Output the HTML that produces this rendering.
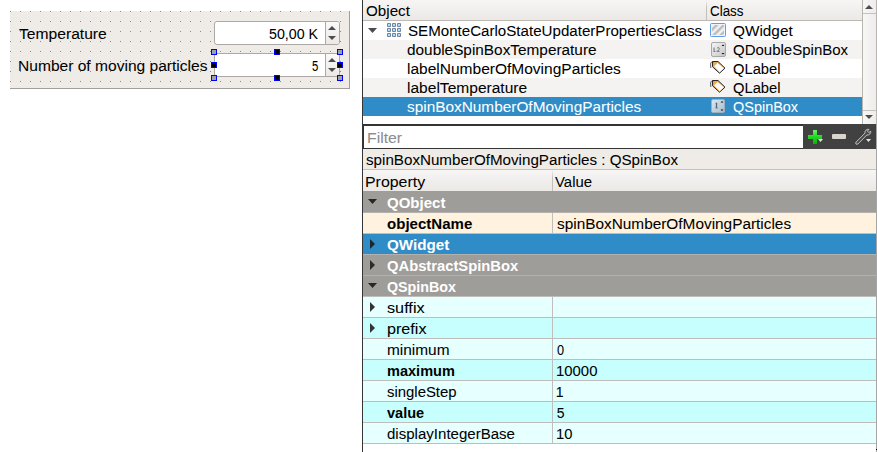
<!DOCTYPE html>
<html><head><meta charset="utf-8">
<style>
html,body{margin:0;padding:0;}
body{width:877px;height:452px;overflow:hidden;background:#fff;position:relative;font-family:"Liberation Sans",sans-serif;}
.a{position:absolute;box-sizing:border-box;}
.t{position:absolute;transform-origin:0 0;font-size:14px;line-height:16px;white-space:nowrap;color:#000;font-family:"Liberation Sans",sans-serif;}
.hd{width:6px;height:6px;border:1px solid #0000ff;background:#000;position:absolute;box-sizing:border-box;}
.hg{background:#a0a0a0;}
</style></head><body>
<!-- left form -->
<div class="a" style="left:10px;top:11px;width:340px;height:78px;background:#efebe7;border-right:1px solid #a19f9c;border-bottom:1px solid #a19f9c;"></div>
<svg class="a" style="left:10px;top:11px" width="339" height="77">
<defs><pattern id="dots" x="0" y="0" width="10" height="10" patternUnits="userSpaceOnUse"><rect x="0" y="0" width="1" height="1" fill="#8a8886"/></pattern></defs>
<rect width="339" height="77" fill="url(#dots)"/>
</svg>
<!-- spinbox 1 -->
<div class="a" style="left:214px;top:21px;width:126px;height:24px;background:#fff;border:1px solid #aba8a5;border-radius:3px;"></div>
<div class="a" style="left:325px;top:22px;width:14px;height:22px;border-left:1px solid #aba8a5;background:linear-gradient(#fbfaf9,#ebe8e5);border-radius:0 2px 2px 0;"></div>
<svg class="a" style="left:328px;top:26px" width="8" height="14"><path d="M0 4 L4 0 L8 4 Z M0 10 L8 10 L4 14 Z" fill="#4d4d4d"/></svg>
<!-- spinbox 2 -->
<div class="a" style="left:214px;top:53px;width:126px;height:24px;background:#fff;border:1px solid #aba8a5;border-radius:3px;"></div>
<div class="a" style="left:325px;top:54px;width:14px;height:22px;border-left:1px solid #aba8a5;background:linear-gradient(#fbfaf9,#ebe8e5);border-radius:0 2px 2px 0;"></div>
<svg class="a" style="left:328px;top:58px" width="8" height="14"><path d="M0 4 L4 0 L8 4 Z M0 10 L8 10 L4 14 Z" fill="#4d4d4d"/></svg>
<!-- handles -->
<div class="hd hg" style="left:211px;top:49px"></div>
<div class="hd" style="left:274px;top:49px"></div>
<div class="hd hg" style="left:337px;top:49px"></div>
<div class="hd" style="left:211px;top:62px"></div>
<div class="hd" style="left:337px;top:62px"></div>
<div class="hd hg" style="left:211px;top:75px"></div>
<div class="hd" style="left:274px;top:75px"></div>
<div class="hd hg" style="left:337px;top:75px"></div>

<!-- right panel -->
<div class="a" style="left:362px;top:0;width:1px;height:452px;background:#363636;"></div>
<div class="a" style="left:876px;top:0;width:1px;height:452px;background:#a5a5a5;"></div>
<!-- tree header -->
<div class="a" style="left:363px;top:0;width:499px;height:21px;background:linear-gradient(#f7f6f5,#ebe8e5);border-bottom:1px solid #bdbab6;"></div>
<div class="a" style="left:706px;top:0;width:1px;height:20px;background:linear-gradient(rgba(180,177,173,0),#c2bfbb 40%);"></div>
<!-- rows -->
<div class="a" style="left:363px;top:21px;width:499px;height:19px;background:#fff;"></div>
<div class="a" style="left:363px;top:40px;width:499px;height:19px;background:#f5f3f1;"></div>
<div class="a" style="left:363px;top:59px;width:499px;height:19px;background:#fff;"></div>
<div class="a" style="left:363px;top:78px;width:499px;height:19px;background:#f5f3f1;"></div>
<div class="a" style="left:363px;top:97px;width:499px;height:19px;background:#308cc6;"></div>
<svg class="a" style="left:368px;top:28px" width="9" height="5"><path d="M0 0 L9 0 L4.5 5 Z" fill="#4a4a4a"/></svg>
<!-- grid icon -->
<svg class="a" style="left:386px;top:22px" width="16" height="16"><rect x="1" y="1" width="4" height="4" rx="1" fill="#71839e"/><rect x="2" y="2" width="2" height="2" fill="#aee0ff"/><rect x="6" y="1" width="4" height="4" rx="1" fill="#71839e"/><rect x="7" y="2" width="2" height="2" fill="#aee0ff"/><rect x="11" y="1" width="4" height="4" rx="1" fill="#71839e"/><rect x="12" y="2" width="2" height="2" fill="#aee0ff"/><rect x="1" y="6" width="4" height="4" rx="1" fill="#71839e"/><rect x="2" y="7" width="2" height="2" fill="#aee0ff"/><rect x="6" y="6" width="4" height="4" rx="1" fill="#71839e"/><rect x="7" y="7" width="2" height="2" fill="#aee0ff"/><rect x="11" y="6" width="4" height="4" rx="1" fill="#71839e"/><rect x="12" y="7" width="2" height="2" fill="#aee0ff"/><rect x="1" y="11" width="4" height="4" rx="1" fill="#71839e"/><rect x="2" y="12" width="2" height="2" fill="#aee0ff"/><rect x="6" y="11" width="4" height="4" rx="1" fill="#71839e"/><rect x="7" y="12" width="2" height="2" fill="#aee0ff"/><rect x="11" y="11" width="4" height="4" rx="1" fill="#71839e"/><rect x="12" y="12" width="2" height="2" fill="#aee0ff"/></svg>
<!-- class icons -->
<svg class="a" style="left:710px;top:23px" width="16" height="14">
<defs><pattern id="hatch" width="5" height="5" patternUnits="userSpaceOnUse" patternTransform="rotate(45)"><rect width="5" height="5" fill="#f2f2f2"/><rect width="2.5" height="5" fill="#bdbdbd"/></pattern></defs>
<rect x="0.5" y="0.5" width="15" height="13" rx="1" fill="#eef4fc" stroke="#5f9de6"/>
<rect x="2" y="2" width="12" height="10" fill="url(#hatch)"/>
</svg>
<svg class="a" style="left:710px;top:41px" width="16" height="16">
<defs><linearGradient id="sg" x1="0" y1="0" x2="1" y2="1"><stop offset="0" stop-color="#f6f6f6"/><stop offset="1" stop-color="#c4c4c4"/></linearGradient></defs>
<rect x="1.5" y="1.5" width="14" height="14" rx="1.5" fill="url(#sg)" stroke="#a8a8a8"/>
<path d="M4 6.5 V10.5 M3.5 10.5 H4.8" stroke="#666" stroke-width="0.9"/>
<rect x="5.6" y="9.8" width="0.9" height="0.9" fill="#666"/>
<path d="M7.3 7 Q8.8 5.8 9.3 7.2 Q9.3 8.2 7.4 10.4 H9.6" stroke="#666" stroke-width="0.9" fill="none"/>
<path d="M11.5 5 L13 3.5 L14.5 5 Z M11.5 12 L14.5 12 L13 13.5 Z" fill="#111"/>
</svg>
<svg class="a" style="left:708px;top:58px" width="20" height="18">
<path d="M4.5 3.5 L10 3.5 L17 10.2 L11.5 15.2 L4.5 8.8 Z" fill="#f0a850" stroke="#2a2a2a" stroke-width="1" stroke-linejoin="round"/>
<path d="M6.2 8.3 L9.6 4.9 L16 10.2 L11.6 14.3 Z" fill="#fff"/>
<path d="M6 3.8 C4 3.6 2.6 4.2 2.6 6 L2.8 10" stroke="#333" stroke-width="0.8" fill="none"/>
</svg>
<svg class="a" style="left:708px;top:77px" width="20" height="18">
<path d="M4.5 3.5 L10 3.5 L17 10.2 L11.5 15.2 L4.5 8.8 Z" fill="#f0a850" stroke="#2a2a2a" stroke-width="1" stroke-linejoin="round"/>
<path d="M6.2 8.3 L9.6 4.9 L16 10.2 L11.6 14.3 Z" fill="#fff"/>
<path d="M6 3.8 C4 3.6 2.6 4.2 2.6 6 L2.8 10" stroke="#333" stroke-width="0.8" fill="none"/>
</svg>
<svg class="a" style="left:710px;top:98px" width="16" height="16">
<defs><linearGradient id="qg" x1="0" y1="0" x2="1" y2="1"><stop offset="0" stop-color="#dbe9f5"/><stop offset="1" stop-color="#a9bccb"/></linearGradient></defs>
<rect x="1.5" y="1.5" width="13" height="13" rx="1.5" fill="url(#qg)" stroke="#9eb0bf"/>
<path d="M6.5 5 V10" stroke="#5a6570" stroke-width="1.3"/>
<path d="M5.6 5.2 H7.2 M5.6 10 H7.6" stroke="#5a6570" stroke-width="0.9"/>
<path d="M10.5 4.5 L12 3 L13.5 4.5 Z M10.5 11.5 L13.5 11.5 L12 13 Z" fill="#111"/>
</svg>
<!-- scrollbar -->
<div class="a" style="left:862px;top:0;width:15px;height:124px;background:linear-gradient(90deg,#f8f7f6,#efedeb);border-left:1px solid #b8b5b1;border-right:1px solid #b8b5b1;"></div>
<div class="a" style="left:863px;top:13px;width:13px;height:1px;background:#c5c2be;"></div>
<div class="a" style="left:863px;top:110px;width:13px;height:1px;background:#c5c2be;"></div>
<svg class="a" style="left:865px;top:5px" width="8" height="4"><path d="M0 4 L4 0 L8 4 Z" fill="#4d4d4d"/></svg>
<svg class="a" style="left:865px;top:115px" width="8" height="4"><path d="M0 0 L8 0 L4 4 Z" fill="#4d4d4d"/></svg>
<!-- filter -->
<div class="a" style="left:363px;top:124px;width:513px;height:25px;background:#414142;"></div>
<div class="a" style="left:363px;top:124px;width:440px;height:25px;background:#fff;border-top:2px solid #343434;border-left:1px solid #343434;border-bottom:1px solid #343434;"></div>
<svg class="a" style="left:803px;top:124px" width="73" height="25">
<defs><linearGradient id="pg" x1="0" y1="0" x2="0" y2="1"><stop offset="0" stop-color="#66f266"/><stop offset="0.5" stop-color="#1fd81f"/><stop offset="1" stop-color="#0fae0f"/></linearGradient></defs>
<path d="M10 6 H14 V11 H19 V15 H14 V20 H10 V15 H5 V11 H10 Z" fill="url(#pg)"/>
<path d="M15 15 L20 15 L17.5 18 Z" fill="#e6e6e6"/>
<rect x="29" y="10" width="14" height="5" rx="1" fill="#d9d4cd"/>
<g transform="translate(60,13) rotate(-45)">
<path d="M -8.5 -1.3 L 4.2 -1.3 A 3.1 3.1 0 0 1 9.6 -1.1 L 7.3 -1.1 L 7.3 1.1 L 9.6 1.1 A 3.1 3.1 0 0 1 4.2 1.3 L -8.5 1.3 A 1.3 1.3 0 0 1 -8.5 -1.3 Z" fill="#4a4a4a" stroke="#c8c8c8" stroke-width="0.9"/>
</g>
<path d="M63 15 L68 15 L65.5 18 Z" fill="#e6e6e6"/>
</svg>
<!-- info label -->
<div class="a" style="left:363px;top:149px;width:513px;height:21px;background:#efebe7;border-bottom:1px solid #c6c2bd;"></div>
<!-- property header -->
<div class="a" style="left:363px;top:170px;width:513px;height:21px;background:linear-gradient(#f7f6f5,#ebe8e5);"></div>
<div class="a" style="left:552px;top:170px;width:1px;height:21px;background:linear-gradient(rgba(180,177,173,0),#c2bfbb 40%);"></div>
<!-- property rows -->
<div class="a" style="left:363px;top:191px;width:513px;height:22px;background:#9f9d9a;border-bottom:1px solid #b3b0ad;"></div>
<div class="a" style="left:363px;top:213px;width:513px;height:21px;background:#fff2de;border-bottom:1px solid #c0bebb;"></div>
<div class="a" style="left:363px;top:234px;width:513px;height:21px;background:#308cc6;border-bottom:1px solid #b3b0ad;"></div>
<div class="a" style="left:363px;top:255px;width:513px;height:21px;background:#9f9d9a;border-bottom:1px solid #b3b0ad;"></div>
<div class="a" style="left:363px;top:276px;width:513px;height:21px;background:#9f9d9a;border-bottom:1px solid #c0bebb;"></div>
<div class="a" style="left:363px;top:297px;width:513px;height:21px;background:#e6ffff;border-bottom:1px solid #c0bebb;"></div>
<div class="a" style="left:363px;top:318px;width:513px;height:21px;background:#c7ffff;border-bottom:1px solid #c0bebb;"></div>
<div class="a" style="left:363px;top:339px;width:513px;height:21px;background:#e6ffff;border-bottom:1px solid #c0bebb;"></div>
<div class="a" style="left:363px;top:360px;width:513px;height:21px;background:#c7ffff;border-bottom:1px solid #c0bebb;"></div>
<div class="a" style="left:363px;top:381px;width:513px;height:21px;background:#e6ffff;border-bottom:1px solid #c0bebb;"></div>
<div class="a" style="left:363px;top:402px;width:513px;height:21px;background:#c7ffff;border-bottom:1px solid #c0bebb;"></div>
<div class="a" style="left:363px;top:423px;width:513px;height:21px;background:#e6ffff;border-bottom:1px solid #c0bebb;"></div>
<!-- vertical grid line for value rows -->
<div class="a" style="left:552px;top:213px;width:1px;height:20px;background:#c0bebb;"></div>
<div class="a" style="left:552px;top:297px;width:1px;height:146px;background:#c0bebb;"></div>
<!-- expand arrows -->
<svg class="a" style="left:368px;top:199px" width="9" height="6"><path d="M0 0 L9 0 L4.5 5 Z" fill="#262626"/></svg>
<svg class="a" style="left:370px;top:239px" width="6" height="10"><path d="M0 0 L5 5 L0 10 Z" fill="#1b2631"/></svg>
<svg class="a" style="left:370px;top:260px" width="6" height="10"><path d="M0 0 L5 5 L0 10 Z" fill="#2b2b2b"/></svg>
<svg class="a" style="left:368px;top:283px" width="9" height="6"><path d="M0 0 L9 0 L4.5 5 Z" fill="#262626"/></svg>
<svg class="a" style="left:370px;top:302px" width="6" height="10"><path d="M0 0 L5 5 L0 10 Z" fill="#333"/></svg>
<svg class="a" style="left:370px;top:323px" width="6" height="10"><path d="M0 0 L5 5 L0 10 Z" fill="#333"/></svg>
<!-- black dot -->
<div class="a" style="left:876px;top:449px;width:1px;height:1px;background:#000;"></div>
<div class="t" style="left:19.00px;top:26px;transform:scaleX(1.1167);-webkit-text-stroke:0.05px #000;">Temperature</div>
<div class="t" style="left:18.49px;top:58px;transform:scaleX(1.1122);-webkit-text-stroke:0.05px #000;">Number of moving particles</div>
<div class="t" style="left:269.00px;top:26px;transform:scaleX(1.0179);-webkit-text-stroke:0.05px #000;">50,00 K</div>
<div class="t" style="left:312.00px;top:58px;transform:scaleX(0.8125);-webkit-text-stroke:0.05px #000;">5</div>
<div class="t" style="left:366.00px;top:3px;transform:scaleX(1.0845);-webkit-text-stroke:0.05px #000;">Object</div>
<div class="t" style="left:709.50px;top:3px;transform:scaleX(0.9570);-webkit-text-stroke:0.05px #000;">Class</div>
<div class="t" style="left:408.00px;top:23px;transform:scaleX(1.0795);-webkit-text-stroke:0.05px #000;">SEMonteCarloStateUpdaterPropertiesClass</div>
<div class="t" style="left:732.70px;top:23px;transform:scaleX(1.0958);-webkit-text-stroke:0.05px #000;">QWidget</div>
<div class="t" style="left:406.50px;top:42px;transform:scaleX(1.0972);-webkit-text-stroke:0.05px #000;">doubleSpinBoxTemperature</div>
<div class="t" style="left:732.70px;top:42px;transform:scaleX(1.0717);-webkit-text-stroke:0.05px #000;">QDoubleSpinBox</div>
<div class="t" style="left:406.50px;top:61px;transform:scaleX(1.1080);-webkit-text-stroke:0.05px #000;">labelNumberOfMovingParticles</div>
<div class="t" style="left:732.70px;top:61px;transform:scaleX(1.0525);-webkit-text-stroke:0.05px #000;">QLabel</div>
<div class="t" style="left:406.50px;top:80px;transform:scaleX(1.1108);-webkit-text-stroke:0.05px #000;">labelTemperature</div>
<div class="t" style="left:732.70px;top:80px;transform:scaleX(1.0525);-webkit-text-stroke:0.05px #000;">QLabel</div>
<div class="t" style="left:406.50px;top:99px;transform:scaleX(1.0985);-webkit-text-stroke:0.05px #fff;color:#fff;">spinBoxNumberOfMovingParticles</div>
<div class="t" style="left:732.70px;top:99px;transform:scaleX(1.0328);-webkit-text-stroke:0.05px #fff;color:#fff;">QSpinBox</div>
<div class="t" style="left:367.17px;top:130px;transform:scaleX(1.1265);-webkit-text-stroke:0.05px #8c8c8c;color:#8c8c8c;">Filter</div>
<div class="t" style="left:366.00px;top:152px;transform:scaleX(1.0837);-webkit-text-stroke:0.05px #000;">spinBoxNumberOfMovingParticles : QSpinBox</div>
<div class="t" style="left:364.86px;top:174px;transform:scaleX(1.1366);-webkit-text-stroke:0.05px #000;">Property</div>
<div class="t" style="left:555.40px;top:174px;transform:scaleX(1.0663);-webkit-text-stroke:0.05px #000;">Value</div>
<div class="t" style="left:386.60px;top:195px;transform:scaleX(1.0731);font-weight:bold;color:#fff;">QObject</div>
<div class="t" style="left:386.60px;top:216px;transform:scaleX(1.0745);font-weight:bold;">objectName</div>
<div class="t" style="left:386.60px;top:237px;transform:scaleX(1.0855);font-weight:bold;color:#fff;">QWidget</div>
<div class="t" style="left:386.60px;top:258px;transform:scaleX(1.0539);font-weight:bold;color:#fff;">QAbstractSpinBox</div>
<div class="t" style="left:386.60px;top:279px;transform:scaleX(1.0194);font-weight:bold;color:#fff;">QSpinBox</div>
<div class="t" style="left:386.60px;top:300px;transform:scaleX(1.1597);-webkit-text-stroke:0.05px #000;">suffix</div>
<div class="t" style="left:386.60px;top:321px;transform:scaleX(1.1538);-webkit-text-stroke:0.05px #000;">prefix</div>
<div class="t" style="left:386.60px;top:342px;transform:scaleX(1.1013);-webkit-text-stroke:0.05px #000;">minimum</div>
<div class="t" style="left:386.60px;top:363px;transform:scaleX(1.0384);font-weight:bold;">maximum</div>
<div class="t" style="left:386.60px;top:384px;transform:scaleX(1.0641);-webkit-text-stroke:0.05px #000;">singleStep</div>
<div class="t" style="left:386.60px;top:405px;transform:scaleX(1.0385);font-weight:bold;">value</div>
<div class="t" style="left:386.60px;top:426px;transform:scaleX(1.0747);-webkit-text-stroke:0.05px #000;">displayIntegerBase</div>
<div class="t" style="left:556.80px;top:216px;transform:scaleX(1.0981);-webkit-text-stroke:0.05px #000;">spinBoxNumberOfMovingParticles</div>
<div class="t" style="left:556.80px;top:342px;transform:scaleX(0.9125);-webkit-text-stroke:0.05px #000;">0</div>
<div class="t" style="left:555.74px;top:363px;transform:scaleX(1.0644);-webkit-text-stroke:0.05px #000;">10000</div>
<div class="t" style="left:555.80px;top:384px;-webkit-text-stroke:0.05px #000;">1</div>
<div class="t" style="left:556.80px;top:405px;-webkit-text-stroke:0.05px #000;">5</div>
<div class="t" style="left:555.74px;top:426px;transform:scaleX(1.0550);-webkit-text-stroke:0.05px #000;">10</div>
</body></html>
